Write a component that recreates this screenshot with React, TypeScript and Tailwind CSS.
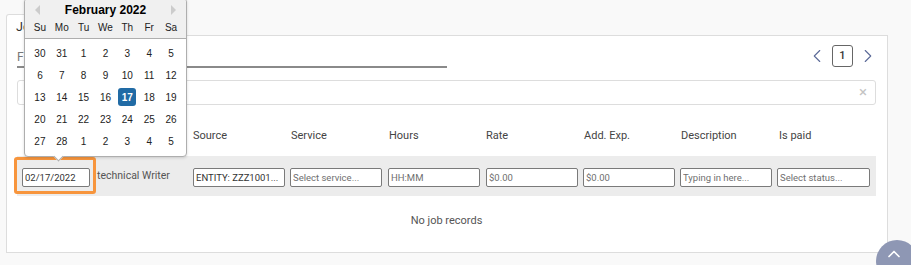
import { ChevronLeft, ChevronRight, ChevronUp } from 'lucide-react';

// Jobs tab — timesheet row with the date picker open (react-datepicker look).

const COLS = 'grid grid-cols-[75px_96px_97px_98px_98px_97px_97px_97px_104px]';

const WEEKS = [
  [30, 31, 1, 2, 3, 4, 5],
  [6, 7, 8, 9, 10, 11, 12],
  [13, 14, 15, 16, 17, 18, 19],
  [20, 21, 22, 23, 24, 25, 26],
  [27, 28, 1, 2, 3, 4, 5],
];

function Field({ value, placeholder, w = 'w-[92px]' }: { value?: string; placeholder?: string; w?: string }) {
  return (
    <input
      readOnly
      value={value ?? ''}
      placeholder={placeholder}
      className={`${w} h-[19px] border border-[#7a7a7a] rounded-[2px] bg-white px-[2px] text-[9.5px] text-[#333] placeholder:text-[#6f6f6f] outline-none text-ellipsis`}
    />
  );
}

function DatePicker() {
  return (
    <div className="absolute z-20 left-[24px] top-[-2px] w-[163px] h-[159px] bg-white border border-[#aeaeae] rounded-[4px] shadow-[0_1px_3px_rgba(0,0,0,0.15)] font-['Liberation_Sans',Arial,sans-serif] text-[#000]">
      <div className="h-[40px] bg-[#f0f0f0] border-b border-[#aeaeae] rounded-t-[4px] relative">
        <div className="pt-[4px] text-center text-[12px] font-bold leading-[14px]">February 2022</div>
        <span className="absolute left-[10px] top-[6px] w-0 h-0 border-y-[5px] border-y-transparent border-r-[5px] border-r-[#ccc]" />
        <span className="absolute right-[10px] top-[6px] w-0 h-0 border-y-[5px] border-y-transparent border-l-[5px] border-l-[#ccc]" />
        <div className="grid grid-cols-7 px-[4px] mt-[4px] text-[10px] text-[#222] leading-[14px]">
          {['Su', 'Mo', 'Tu', 'We', 'Th', 'Fr', 'Sa'].map((d) => (
            <div key={d} className="text-center">{d}</div>
          ))}
        </div>
      </div>
      <div className="px-[4px] pt-[3px]">
        {WEEKS.map((w, i) => (
          <div key={i} className="grid grid-cols-7 h-[22px]">
            {w.map((d, j) => {
              const sel = i === 2 && d === 17;
              return (
                <div key={j} className="flex items-center justify-center">
                  <span
                    className={`w-[18px] h-[18px] flex items-center justify-center rounded-[3px] text-[10px] ${
                      sel ? 'bg-[#216ba5] text-white font-bold' : 'text-[#222]'
                    }`}
                  >
                    {d}
                  </span>
                </div>
              );
            })}
          </div>
        ))}
      </div>
      <span className="absolute left-[30px] bottom-[-4px] w-[7px] h-[7px] bg-white border-r border-b border-[#aeaeae] rotate-45" />
    </div>
  );
}

export default function App() {
  return (
    <div className="relative w-[911px] h-[265px] overflow-hidden bg-[#f9f9f9] font-['Roboto','Liberation_Sans',sans-serif] text-[#444]">
      <div className="pl-[6px] pt-[14px] w-[888px]">
        {/* Tabs */}
        <div className="flex">
          <div className="h-[22px] w-[60px] bg-white border border-b-0 border-[#ddd] rounded-t-[3px] pl-[9px] pt-[1px] text-[12.5px] leading-[21px] text-[#333] relative z-10">
            Jobs
          </div>
        </div>

        {/* Card */}
        <div className="-mt-px h-[218px] bg-white border border-[#ddd] pl-[10px] pr-[11px]">
          <div className="flex items-start justify-between h-[44px]">
            <div className="mt-[13px] w-[430px] border-b-2 border-[#8a8a8a] text-[12px] leading-[16px] text-[#777] pb-[1px]">
              Filter...
            </div>
            <div className="flex items-center mt-[9px] -mr-[3px] gap-[4px] text-[#5c6a98]">
              <ChevronLeft size={22} strokeWidth={1.2} />
              <div className="w-[21px] h-[22px] border border-[#666] rounded-[3px] flex items-center justify-center text-[11px] font-medium text-[#333]">
                1
              </div>
              <ChevronRight size={22} strokeWidth={1.2} />
            </div>
          </div>

          <div className="h-[25px] border border-[#ddd] rounded-[3px] flex items-center justify-end pr-[8px] text-[#c4c4c4] text-[15px]">
            ×
          </div>

          <div className={`${COLS} mt-[24px] h-[27px] text-[11px] text-[#444] leading-[14px]`}>
            <div className="pl-[5px]" />
            <div className="pl-[5px]">Job</div>
            <div className="pl-[5px]">Source</div>
            <div className="pl-[6px]">Service</div>
            <div className="pl-[6px]">Hours</div>
            <div className="pl-[5px]">Rate</div>
            <div className="pl-[6px]">Add. Exp.</div>
            <div className="pl-[6px]">Description</div>
            <div className="pl-[7px]">Is paid</div>
          </div>

          <div className={`${COLS} h-[40px] bg-[#ececec] items-center`}>
            <div className="pl-[5px]"><Field value="02/17/2022" w="w-[68px]" /></div>
            <div className="pl-[5px] text-[10.5px] text-[#555]">technical Writer</div>
            <div className="pl-[5px]"><Field value="ENTITY: ZZZ1001..." /></div>
            <div className="pl-[5px]"><Field placeholder="Select service..." /></div>
            <div className="pl-[5px]"><Field placeholder="HH:MM" /></div>
            <div className="pl-[5px]"><Field placeholder="$0.00" /></div>
            <div className="pl-[5px]"><Field placeholder="$0.00" /></div>
            <div className="pl-[5px]"><Field placeholder="Typing in here..." /></div>
            <div className="pl-[5px]"><Field placeholder="Select status..." w="w-[93px]" /></div>
          </div>

          <div className="text-center text-[11px] text-[#555] mt-[17px]">No job records</div>
        </div>
      </div>

      {/* focus highlight around the date cell */}
      <div className="absolute left-[14px] top-[157px] w-[82px] h-[37px] border-[3px] border-[#f7953d] rounded-[3px]" />

      <DatePicker />

      {/* back to top */}
      <div className="absolute left-[876px] top-[240px] w-[42px] h-[42px] rounded-full bg-[#8e97b4] flex justify-center pt-[4px] text-white">
        <ChevronUp size={20} strokeWidth={2} className="-ml-[6px]" />
      </div>
    </div>
  );
}
